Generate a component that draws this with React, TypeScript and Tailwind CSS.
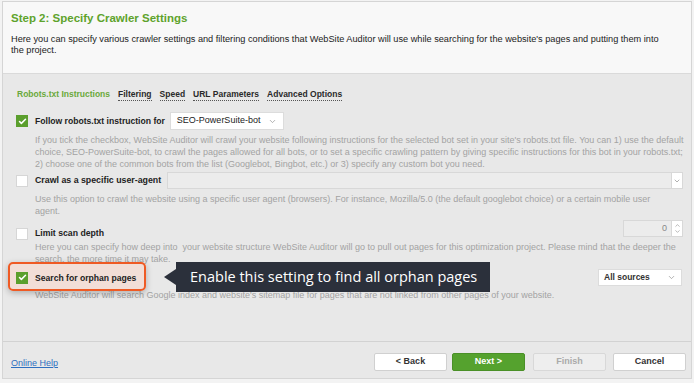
import { ChevronDown, ChevronUp, Check } from "lucide-react";

const font = { fontFamily: '"Liberation Sans", Arial, sans-serif' };

function Box({ checked }: { checked?: boolean }) {
  return checked ? (
    <span className="w-[12px] h-[12px] bg-[#5b9f2d] flex items-center justify-center shrink-0">
      <Check size={9} strokeWidth={4} className="text-white" />
    </span>
  ) : (
    <span className="w-[12px] h-[12px] bg-white border border-[#d6d6d6] shrink-0" />
  );
}

function Desc({ lines }: { lines: string[] }) {
  return (
    <p className="pl-[19px] text-[9px] leading-[12px] text-[#a3a3a3] whitespace-pre">
      {lines.map((l, i) => (
        <span key={i} className="block">{l}</span>
      ))}
    </p>
  );
}

export default function App() {
  return (
    <div className="w-[694px] h-[383px] bg-[#f3f3f3] px-[2px] pt-[1px] pb-[4px]" style={font}>
      <div className="h-full border border-[#d5d5d5] bg-[#e8e8e8] flex flex-col">
        {/* Header */}
        <div className="h-[72px] bg-[#f8f8f8] border-b border-[#dadada] px-[8px] pt-[9px] shrink-0">
          <h1 className="text-[11.5px] leading-[14px] font-bold text-[#5ea32c]">Step 2: Specify Crawler Settings</h1>
          <p className="mt-[9px] pr-[20px] text-[9.2px] leading-[11px] text-[#222]">
            Here you can specify various crawler settings and filtering conditions that WebSite Auditor will use while searching for the website's pages and putting them into the project.
          </p>
        </div>

        {/* Body */}
        <div className="flex-1 pl-[13px] pr-[8px]">
          <div className="mt-[14px] h-[12px] flex items-center gap-[8px] text-[8.5px] font-bold leading-[12px] pl-[1px]">
            <span className="text-[#6aa83a]">Robots.txt Instructions</span>
            {["Filtering", "Speed", "URL Parameters", "Advanced Options"].map((t) => (
              <span key={t} className="text-[#2a2a2a] border-b border-dotted border-[#555]">{t}</span>
            ))}
          </div>

          <div className="mt-[12px] h-[18px] flex items-center gap-[7px]">
            <Box checked />
            <span className="text-[8.6px] font-bold text-[#222]">Follow robots.txt instruction for</span>
            <span className="ml-[-2px] w-[114px] h-[18px] bg-white border border-[#dcdcdc] flex items-center justify-between px-[6px] text-[9px] text-[#222]">
              SEO-PowerSuite-bot
              <ChevronDown size={9} className="text-[#999]" />
            </span>
          </div>
          <div className="mt-[4px]">
            <Desc
              lines={[
                "If you tick the checkbox, WebSite Auditor will crawl your website following instructions for the selected bot set in your site's robots.txt file. You can 1) use the default",
                "choice, SEO-PowerSuite-bot, to crawl the pages allowed for all bots, or to set a specific crawling pattern by giving specific instructions for this bot in your robots.txt;",
                "2) choose one of the common bots from the list (Googlebot, Bingbot, etc.) or 3) specify any custom bot you need.",
              ]}
            />
          </div>

          <div className="mt-[2px] h-[17px] flex items-center gap-[7px]">
            <Box />
            <span className="text-[8.8px] font-bold text-[#222]">Crawl as a specific user-agent</span>
            <span className="flex-1 ml-[-1px] h-[17px] bg-[#ececec] border border-[#d8d8d8] flex justify-end">
              <span className="w-[11px] h-full bg-white border-l border-[#d8d8d8] flex items-center justify-center">
                <ChevronDown size={8} className="text-[#888]" />
              </span>
            </span>
          </div>
          <div className="mt-[4px]">
            <Desc
              lines={[
                "Use this option to crawl the website using a specific user agent (browsers). For instance, Mozilla/5.0 (the default googlebot choice) or a certain mobile user",
                "agent.",
              ]}
            />
          </div>

          <div className="mt-[3px] h-[20px] flex gap-[7px]">
            <span className="self-end flex items-center gap-[7px] h-[12px]">
              <Box />
              <span className="text-[8.7px] font-bold text-[#222]">Limit scan depth</span>
            </span>
            <span className="ml-auto self-start w-[60px] h-[17px] bg-[#ececec] border border-[#d8d8d8] flex">
              <span className="flex-1 text-right pr-[4px] text-[9px] leading-[15px] text-[#888]">0</span>
              <span className="w-[11px] h-full bg-white border-l border-[#d8d8d8] flex flex-col items-center justify-center">
                <ChevronUp size={7} className="text-[#888] -mb-[1px]" />
                <ChevronDown size={7} className="text-[#888]" />
              </span>
            </span>
          </div>
          <div className="mt-[1px]">
            <Desc
              lines={[
                "Here you can specify how deep into  your website structure WebSite Auditor will go to pull out pages for this optimization project. Please mind that the deeper the",
                "search, the more time it may take.",
              ]}
            />
          </div>

          <div className="relative h-[24px] flex items-center">
            <div className="absolute left-[-8px] top-[-3px] w-[138px] h-[29px] rounded-[5px] border-2 border-[#ef5a24] bg-[#f2ddd6]/95 shadow-[0_2px_6px_rgba(0,0,0,0.25)]" />
            <span className="relative flex items-center gap-[7px] pt-[2px]">
              <Box checked />
              <span className="text-[8.6px] font-bold text-[#222]">Search for orphan pages</span>
            </span>
            <div className="absolute left-[148px] top-[-3px] h-[30px] flex items-center">
              <span className="w-0 h-0 border-y-[8px] border-y-transparent border-r-[12px] border-r-[#2b303b]" />
              <span
                className="w-[314px] h-[30px] bg-[#2b303b] text-white text-[14.5px] flex items-center pl-[14px]"
                style={{ fontFamily: '"Open Sans", "Noto Sans", sans-serif' }}
              >
                Enable this setting to find all orphan pages
              </span>
            </div>
            <span className="ml-auto mr-[1px] w-[84px] h-[17px] bg-white border border-[#dcdcdc] flex items-center justify-between px-[5px] text-[8.5px] font-bold text-[#333]">
              All sources
              <ChevronDown size={9} className="text-[#999]" />
            </span>
          </div>
          <Desc lines={["WebSite Auditor will search Google index and website's sitemap file for pages that are not linked from other pages of your website."]} />
        </div>

        {/* Footer */}
        <div className="h-[37px] border-t border-[#d2d2d2] flex items-start pt-[11px] pl-[8px] pr-[5px] shrink-0">
          <a className="mt-[4px] text-[9px] text-[#2f6fc0] underline">Online Help</a>
          <div className="ml-auto flex">
            <button className="w-[73px] h-[18px] bg-white border border-[#d0d0d0] rounded-[2px] text-[9px] font-bold text-[#333]">&lt; Back</button>
            <button className="ml-[5px] w-[73px] h-[18px] bg-[#55a22e] border border-[#4a9027] rounded-[2px] text-[9px] font-bold text-white">Next &gt;</button>
            <button className="ml-[8px] w-[73px] h-[18px] bg-[#eeeeee] border border-[#d8d8d8] rounded-[2px] text-[9px] font-bold text-[#aaa]">Finish</button>
            <button className="ml-[7px] w-[73px] h-[18px] bg-white border border-[#d0d0d0] rounded-[2px] text-[9px] font-bold text-[#333]">Cancel</button>
          </div>
        </div>
      </div>
    </div>
  );
}
